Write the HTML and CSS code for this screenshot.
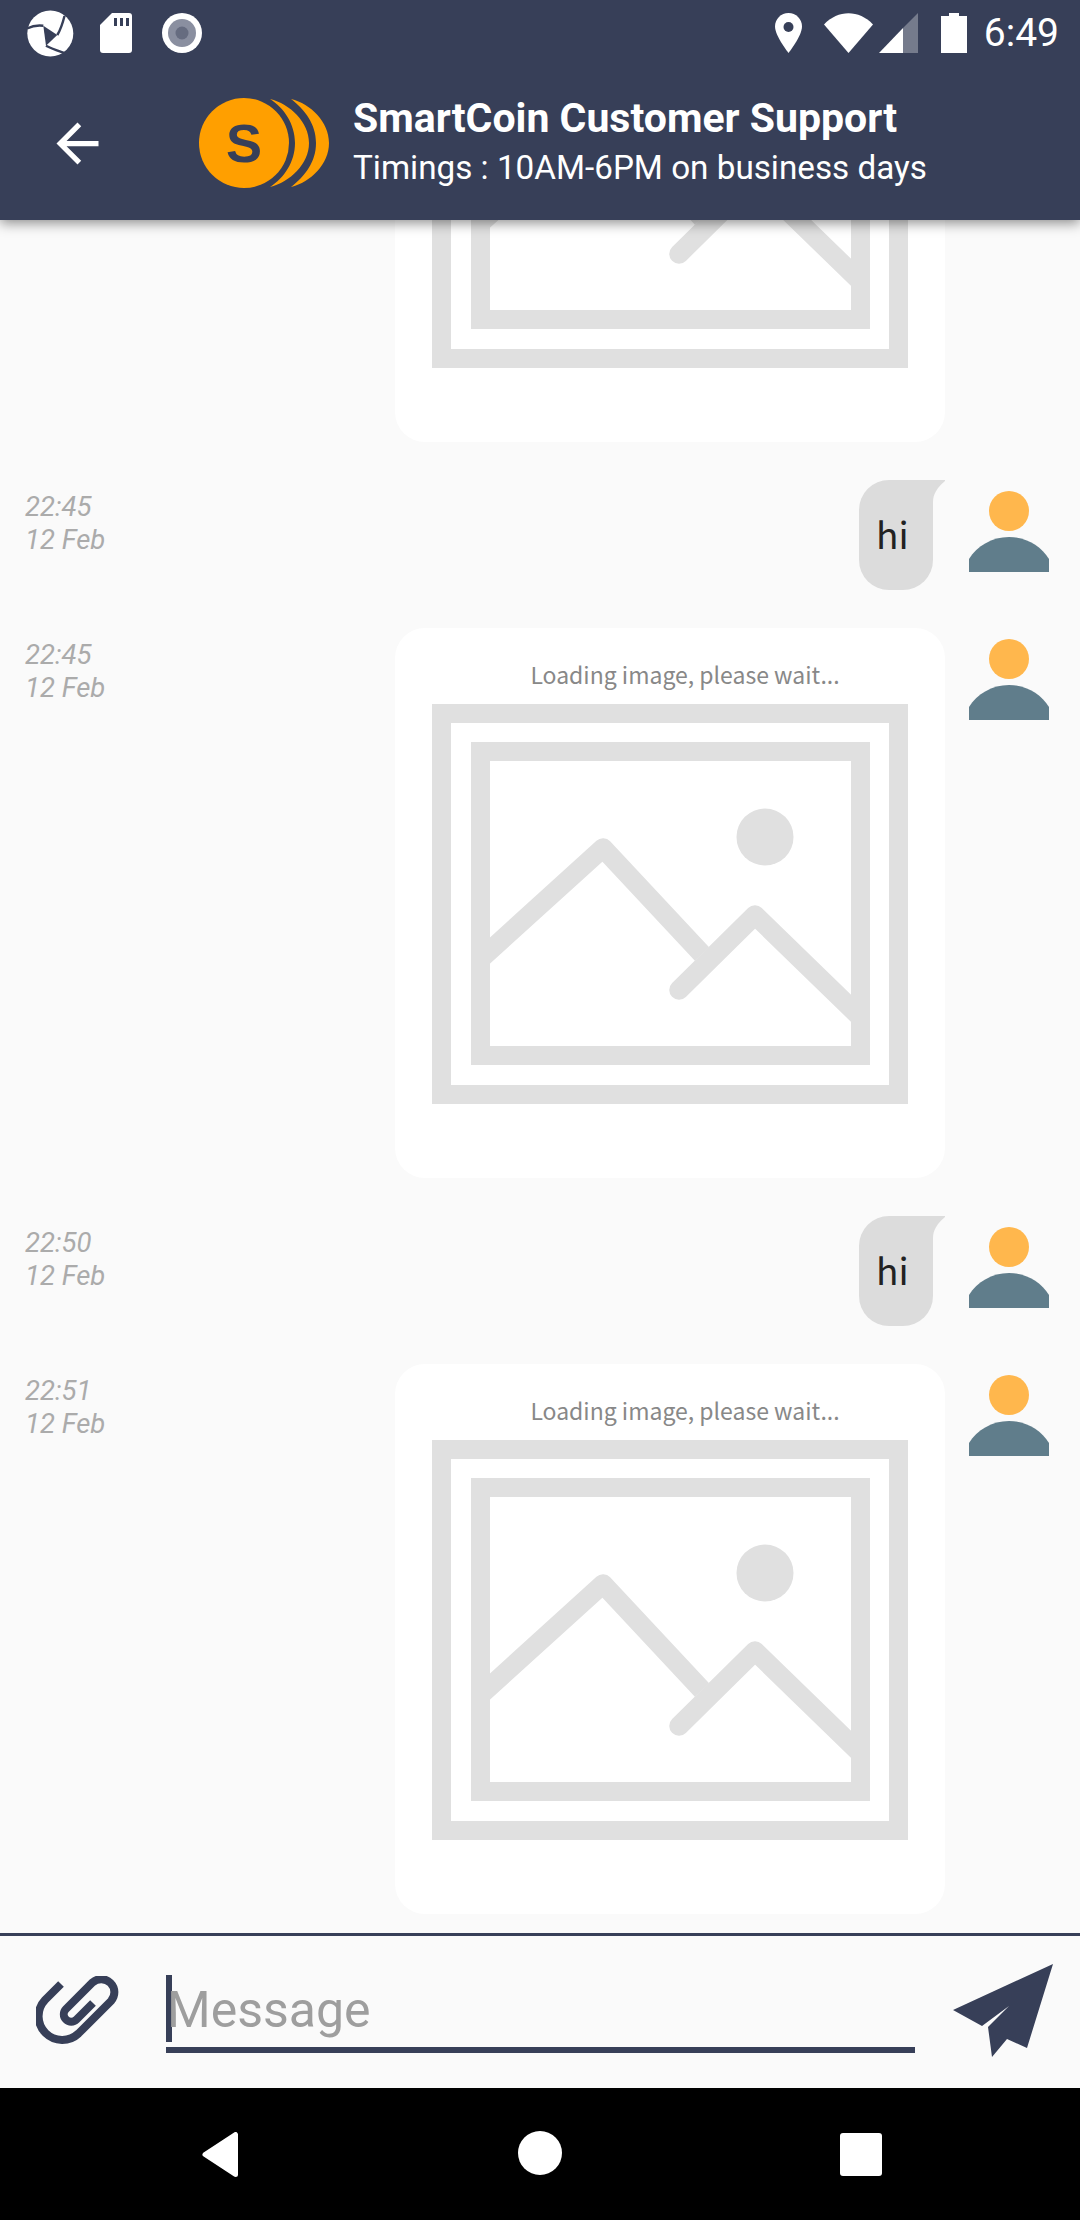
FILE: index.html
```html
<!DOCTYPE html>
<html lang="en">
<head>
    <meta charset="UTF-8">
    <meta name="viewport" content="width=device-width, initial-scale=1.0">
    <title>SmartCoin Customer Support</title>
    <link rel="stylesheet" href="styles.css">
</head>
<body>
    <svg class="defs" width="0" height="0">
        <symbol id="placeholder" viewBox="0 0 476 400">
            <rect x="9.5" y="9.5" width="457" height="381" fill="none" stroke="#e0e0e0" stroke-width="19"/>
            <rect x="48.5" y="47.5" width="380" height="304" fill="none" stroke="#e0e0e0" stroke-width="19"/>
            <circle cx="333" cy="133" r="28.5" fill="#e0e0e0"/>
            <path d="M48 255.6L171 144L270 250" fill="none" stroke="#e0e0e0" stroke-width="19.5" stroke-linejoin="round"/>
            <path d="M247 286L323 211L428 313" fill="none" stroke="#e0e0e0" stroke-width="19.5" stroke-linejoin="round" stroke-linecap="round"/>
        </symbol>
        <symbol id="person" viewBox="0 0 80 92">
            <circle cx="40" cy="31" r="20" fill="#ffb74d"/>
            <path d="M0 92V79C8 66 23 57 40 57S72 66 80 79V92Z" fill="#607d8b"/>
        </symbol>
    </svg>

    <header class="appbar">
        <div class="statusbar">
            <div class="status-left">
                <svg class="ic-swirl" width="48" height="48" viewBox="0 0 48 48">
                    <circle cx="24.3" cy="23.5" r="23" fill="#fff"/>
                    <path d="M17.3 15.7L31.3 25L20 35.7Z" fill="#373f58"/>
                    <path d="M17.3 15.7C12 15 6 16 1 18.5M31.3 25C35 19 37 12 38.5 6M20 35.7C26 39 33 41 40 43.5" fill="none" stroke="#373f58" stroke-width="2.4"/>
                </svg>
                <svg class="ic-sd" width="32" height="40" viewBox="0 0 32 40">
                    <path d="M12 0H29Q32 0 32 3V37Q32 40 29 40H3Q0 40 0 37V12Z" fill="#fff"/>
                    <path d="M14 5H17V13H14ZM20 5H23V13H20ZM26 5H29V13H26Z" fill="#373f58"/>
                </svg>
                <svg class="ic-rec" width="40" height="40" viewBox="0 0 40 40">
                    <circle cx="20" cy="20" r="20" fill="#fff"/>
                    <circle cx="20" cy="20" r="14" fill="#8a8fa0"/>
                    <circle cx="20" cy="20" r="6.5" fill="#666c80"/>
                </svg>
            </div>
            <div class="status-right">
                <svg class="ic-pin" width="27" height="40" viewBox="0 0 27 40">
                    <path d="M13.5 0C6 0 0 6 0 13.5C0 23 13.5 40 13.5 40S27 23 27 13.5C27 6 21 0 13.5 0Z" fill="#fff"/>
                    <circle cx="13.5" cy="14" r="5" fill="#373f58"/>
                </svg>
                <svg class="ic-wifi" width="49" height="40" viewBox="0 0 49 40">
                    <path d="M0 11.5C14 -3.5 35 -3.5 49 11.5L24.5 40Z" fill="#fff"/>
                </svg>
                <svg class="ic-signal" width="39" height="40" viewBox="0 0 39 40">
                    <path d="M39 0V40H24V15Z" fill="#757b8c"/>
                    <path d="M24 15V40H0Z" fill="#fff"/>
                </svg>
                <svg class="ic-battery" width="26" height="40" viewBox="0 0 26 40">
                    <path d="M8 0H18V3H26V40H0V3H8Z" fill="#fff"/>
                </svg>
                <span class="clock">6:49</span>
            </div>
        </div>
        <div class="toolbar">
            <svg class="ic-back" width="63" height="63" viewBox="0 0 24 24">
                <path d="M20 11H7.83l5.59-5.59L12 4l-8 8 8 8 1.41-1.41L7.83 13H20v-2z" fill="#fff"/>
            </svg>
            <svg class="logo" width="130" height="90" viewBox="0 0 130 90">
                <circle cx="45" cy="45" r="45" fill="#ff9f00"/>
                <path d="M71 1C91 6 110 24 110 45S91 84 71 89C85 80 96 64 96 45S85 10 71 1Z" fill="#ff9f00"/>
                <path d="M92 1C112 6 130 24 130 45S112 84 92 89C106 78 117 64 117 45S106 12 92 1Z" fill="#ff9f00"/>
                <text x="45" y="64" class="logo-s">S</text>
            </svg>
            <div class="titles">
                <div class="title">SmartCoin Customer Support</div>
                <div class="subtitle">Timings : 10AM-6PM on business days</div>
            </div>
        </div>
    </header>

    <main class="chat">
        <div class="row">
            <div class="time"></div>
            <div class="card">
                <div class="card-caption"></div>
                <svg class="card-image" width="476" height="400"><use href="#placeholder"/></svg>
            </div>
            <svg class="avatar" width="80" height="92"><use href="#person"/></svg>
        </div>
        <div class="row">
            <div class="time">22:45<br>12 Feb</div>
            <div class="bubble">hi
                <svg class="tail" width="12" height="22" viewBox="0 0 12 22"><path d="M0 0H12V1C4 8 0 14 0 22Z" fill="#dcdcdc"/></svg>
            </div>
            <svg class="avatar" width="80" height="92"><use href="#person"/></svg>
        </div>
        <div class="row">
            <div class="time">22:45<br>12 Feb</div>
            <div class="card">
                <div class="card-caption">Loading image, please wait...</div>
                <svg class="card-image" width="476" height="400"><use href="#placeholder"/></svg>
            </div>
            <svg class="avatar" width="80" height="92"><use href="#person"/></svg>
        </div>
        <div class="row">
            <div class="time">22:50<br>12 Feb</div>
            <div class="bubble">hi
                <svg class="tail" width="12" height="22" viewBox="0 0 12 22"><path d="M0 0H12V1C4 8 0 14 0 22Z" fill="#dcdcdc"/></svg>
            </div>
            <svg class="avatar" width="80" height="92"><use href="#person"/></svg>
        </div>
        <div class="row">
            <div class="time">22:51<br>12 Feb</div>
            <div class="card">
                <div class="card-caption">Loading image, please wait...</div>
                <svg class="card-image" width="476" height="400"><use href="#placeholder"/></svg>
            </div>
            <svg class="avatar" width="80" height="92"><use href="#person"/></svg>
        </div>
    </main>

    <footer class="composer">
        <svg class="ic-clip" width="84" height="72" viewBox="0 0 84 72">
            <path d="M25 8L9 24A23.7 23.7 0 0 0 42.5 57.5L75 25A13.1 13.1 0 0 0 56.5 6.5L30 33A7.4 7.4 0 0 0 40.5 43.5L57 27" fill="none" stroke="#373f58" stroke-width="8"/>
        </svg>
        <div class="field">
            <span class="caret"></span>
            <span class="placeholder">Message</span>
        </div>
        <svg class="ic-send" width="100" height="93" viewBox="0 0 100 93">
            <path d="M100 0L0 46L29 62L56 42L35 63L39 93L54 75L74 84Z" fill="#373f58"/>
        </svg>
    </footer>

    <nav class="navbar">
        <svg width="38" height="45" viewBox="0 0 38 45"><path d="M33.5 2.5V42.5L3 22.5Z" fill="#fff" stroke="#fff" stroke-width="5" stroke-linejoin="round"/></svg>
        <span class="nav-home"></span>
        <span class="nav-recent"></span>
    </nav>
</body>
</html>
```

FILE: styles.css
```css
* {
    box-sizing: border-box;
}
html, body {
    height: 100%;
}
body {
    margin: 0;
    width: 1080px;
    height: 2220px;
    display: flex;
    flex-direction: column;
    overflow: hidden;
    background-color: #fafafa;
    font-family: Roboto, sans-serif;
}
.defs {
    position: absolute;
}
svg {
    display: block;
    flex-shrink: 0;
}

/* header */
.appbar {
    height: 220px;
    flex-shrink: 0;
    background-color: #373f58;
    color: #fff;
    box-shadow: 0 3px 12px rgba(0, 0, 0, 0.45);
    position: relative;
    z-index: 2;
}
.statusbar {
    height: 63px;
    display: flex;
    justify-content: space-between;
    padding: 13px 21px 0 26px;
}
.status-left, .status-right {
    display: flex;
    align-items: flex-start;
}
.ic-swirl {
    margin-top: -3px;
}
.ic-sd {
    margin-left: 26px;
}
.ic-rec {
    margin-left: 30px;
}
.ic-wifi {
    margin-left: 22px;
}
.ic-signal {
    margin-left: 6px;
}
.ic-battery {
    margin-left: 23px;
}
.clock {
    margin-left: 17px;
    font-size: 39px;
    line-height: 40px;
}
.toolbar {
    height: 157px;
    display: flex;
    align-items: center;
    padding: 3px 0 0 46px;
}
.logo {
    margin-left: 90px;
}
.logo-s {
    font-family: "Liberation Sans", sans-serif;
    font-weight: 700;
    font-size: 54px;
    text-anchor: middle;
    fill: #373f58;
}
.titles {
    margin-left: 24px;
}
.title {
    font-size: 41px;
    font-weight: 700;
    line-height: 48px;
    white-space: nowrap;
}
.subtitle {
    font-size: 33.25px;
    line-height: 51px;
    white-space: nowrap;
}

/* messages */
.chat {
    flex: 1;
    min-height: 0;
    overflow: hidden;
    display: flex;
    flex-direction: column;
    justify-content: flex-end;
    gap: 38px;
    padding-bottom: 19px;
}
.row {
    display: flex;
    align-items: flex-start;
    flex-shrink: 0;
    padding: 0 31px 0 25px;
}
.time {
    flex: 1;
    padding-top: 10px;
    font-size: 27.5px;
    line-height: 33px;
    font-style: italic;
    color: #ababab;
}
.avatar {
    margin-left: 24px;
}
.card {
    width: 550px;
    height: 550px;
    border-radius: 30px;
    background-color: #fff;
    display: flex;
    flex-direction: column;
    align-items: center;
    padding-top: 29px;
}
.card-caption {
    height: 47px;
    padding-left: 30px;
    font-family: "Noto Sans CJK SC", sans-serif;
    font-size: 23px;
    line-height: 34px;
    color: #888;
}
.bubble {
    position: relative;
    width: 74px;
    height: 110px;
    margin-right: 12px;
    padding: 30px 0 0 17px;
    border-radius: 30px 0 30px 30px;
    background-color: #dcdcdc;
    font-family: "Noto Sans CJK SC", sans-serif;
    font-size: 37px;
    line-height: 46px;
    color: #222;
}
.tail {
    position: absolute;
    top: 0;
    left: 100%;
}

/* input row */
.composer {
    height: 155px;
    flex-shrink: 0;
    border-top: 3px solid #373f58;
    background-color: #fafafa;
    display: flex;
    padding: 37px 27px 0 36px;
}
.ic-clip {
    margin-top: 3px;
    filter: blur(0.6px);
}
.ic-send {
    margin: -9px 0 0 38px;
}
.field {
    width: 749px;
    height: 80px;
    margin-left: 46px;
    border-bottom: 6px solid #373f58;
    display: flex;
}
.caret {
    width: 6px;
    height: 67px;
    margin-top: 2px;
    background-color: #373f58;
}
.placeholder {
    margin-left: -5px;
    font-size: 50px;
    line-height: 74px;
    color: #9e9e9e;
}

/* android nav */
.navbar {
    height: 132px;
    flex-shrink: 0;
    background-color: #000;
    display: flex;
    align-items: flex-start;
    padding: 44px 0 0 202px;
}
.nav-home {
    width: 44px;
    height: 44px;
    margin: -1px 0 0 278px;
    border-radius: 50%;
    background-color: #fff;
}
.nav-recent {
    width: 42px;
    height: 43px;
    margin: 1px 0 0 278px;
    border-radius: 3px;
    background-color: #fff;
}
```
